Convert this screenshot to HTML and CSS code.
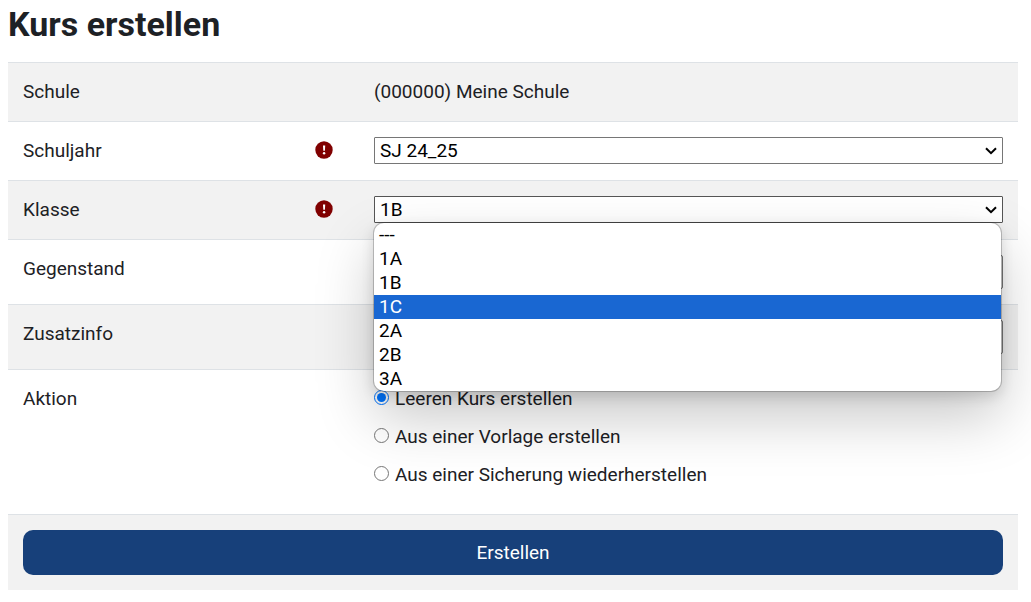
FILE: index.html
```
<!DOCTYPE html>
<html lang="de">
<head>
    <meta charset="UTF-8">
    <meta name="viewport" content="width=device-width, initial-scale=1.0">
    <title>Kurs erstellen</title>
    <link rel="stylesheet" href="styles.css">
</head>
<body>
    <h1>Kurs erstellen</h1>
    <form class="course-form">
        <div class="row">
            <div class="label">Schule</div>
            <div class="field">(000000) Meine Schule</div>
        </div>
        <div class="row">
            <div class="label">
                <label for="schuljahr">Schuljahr</label>
                <svg class="required" viewBox="0 0 18 18" aria-hidden="true">
                    <circle cx="9" cy="9" r="8.7" fill="#800000"/>
                    <path d="M8 4.5h2.2l-.3 5.3H8.3z" fill="#fff"/>
                    <circle cx="9.1" cy="12.3" r="1.2" fill="#fff"/>
                </svg>
            </div>
            <div class="field select-field">
                <select id="schuljahr">
                    <option>SJ 24_25</option>
                </select>
                <svg class="arrow" viewBox="0 0 12 8" aria-hidden="true"><path d="M1 1.2l5 5 5-5" fill="none" stroke="#000" stroke-width="2"/></svg>
            </div>
        </div>
        <div class="row">
            <div class="label">
                <label for="klasse">Klasse</label>
                <svg class="required" viewBox="0 0 18 18" aria-hidden="true">
                    <circle cx="9" cy="9" r="8.7" fill="#800000"/>
                    <path d="M8 4.5h2.2l-.3 5.3H8.3z" fill="#fff"/>
                    <circle cx="9.1" cy="12.3" r="1.2" fill="#fff"/>
                </svg>
            </div>
            <div class="field select-field">
                <select id="klasse" class="open">
                    <option>---</option>
                    <option>1A</option>
                    <option selected>1B</option>
                    <option>1C</option>
                    <option>2A</option>
                    <option>2B</option>
                    <option>3A</option>
                </select>
                <svg class="arrow" viewBox="0 0 12 8" aria-hidden="true"><path d="M1 1.2l5 5 5-5" fill="none" stroke="#000" stroke-width="2"/></svg>
                <ul class="dropdown" role="listbox" aria-label="Klasse">
                    <li role="option">---</li>
                    <li role="option">1A</li>
                    <li role="option">1B</li>
                    <li role="option" class="active" aria-selected="true">1C</li>
                    <li role="option">2A</li>
                    <li role="option">2B</li>
                    <li role="option">3A</li>
                </ul>
            </div>
        </div>
        <div class="row">
            <div class="label"><label for="gegenstand">Gegenstand</label></div>
            <div class="field"><input type="text" id="gegenstand"></div>
        </div>
        <div class="row">
            <div class="label"><label for="zusatzinfo">Zusatzinfo</label></div>
            <div class="field"><input type="text" id="zusatzinfo"></div>
        </div>
        <div class="row">
            <div class="label">Aktion</div>
            <div class="field">
                <label class="choice"><input type="radio" name="aktion" checked>Leeren Kurs erstellen</label>
                <label class="choice"><input type="radio" name="aktion">Aus einer Vorlage erstellen</label>
                <label class="choice"><input type="radio" name="aktion">Aus einer Sicherung wiederherstellen</label>
            </div>
        </div>
        <div class="row submit-row">
            <button type="submit">Erstellen</button>
        </div>
    </form>
</body>
</html>
```
FILE: styles.css
```
* {
    box-sizing: border-box;
}

body {
    margin: 0;
    padding: 4px 13px 11px 8px;
    font-family: Roboto, "Liberation Sans", sans-serif;
    font-size: 19px;
    line-height: 28px;
    color: #1d2125;
    background-color: white;
}

h1 {
    margin: 0 0 18px;
    font-size: 34px;
    line-height: 40px;
    font-weight: bold;
}

.row {
    display: grid;
    grid-template-columns: 321px 1fr;
    column-gap: 30px;
    padding: 15px;
    border-top: 1px solid #dee2e6;
}

.row:nth-child(odd) {
    background-color: #f2f2f2;
}

.label {
    display: flex;
    justify-content: space-between;
    align-items: flex-start;
    padding-right: 11px;
}

.required {
    width: 18px;
    height: 18px;
    margin-top: 4px;
}

.select-field {
    position: relative;
}

select {
    display: block;
    width: 100%;
    height: 27px;
    padding: 0 5px;
    border: 1px solid #767676;
    border-radius: 1px;
    appearance: none;
    background-color: white;
    color: black;
    font-family: inherit;
    font-size: 19px;
}

select.open {
    border-color: #555;
}

/* arrow sits on top of the select */
.arrow {
    position: absolute;
    top: 10px;
    right: 6px;
    width: 12px;
    height: 8px;
    pointer-events: none;
}

.dropdown {
    position: absolute;
    z-index: 1;
    top: 27px;
    left: 0;
    right: 2px;
    margin: 0;
    padding: 0;
    list-style: none;
    background-color: white;
    color: black;
    border-radius: 10px;
    box-shadow: 0 0 0 1px rgba(0, 0, 0, 0.2), 0 26px 58px rgba(0, 0, 0, 0.22), 0 5px 14px rgba(0, 0, 0, 0.14);
}

.dropdown li {
    padding: 0 5px;
    line-height: 24px;
}

.dropdown .active {
    background-color: #1967d2;
    color: white;
}

input[type="text"] {
    display: block;
    width: 100%;
    height: 34px;
    padding: 0 5px;
    border: 1px solid #767676;
    border-radius: 2px;
    font-family: inherit;
    font-size: 19px;
}

.choice {
    display: flex;
    align-items: flex-start;
    gap: 6px;
    margin-bottom: 10px;
}

.choice input {
    width: 15px;
    height: 15px;
    margin: 5px 0 0;
}

.submit-row {
    display: block;
}

button {
    display: block;
    width: 100%;
    height: 45px;
    border: none;
    border-radius: 10px;
    background-color: #17407a;
    color: white;
    font-family: inherit;
    font-size: 19px;
    cursor: pointer;
}
```
